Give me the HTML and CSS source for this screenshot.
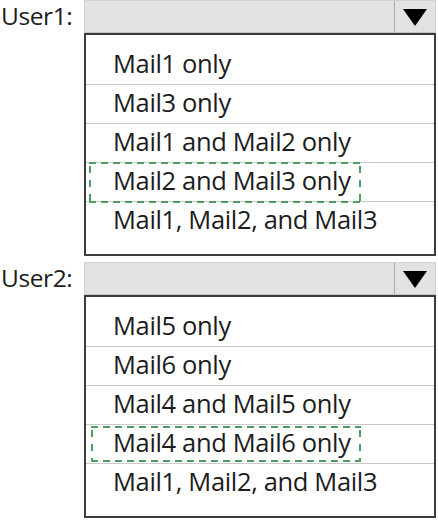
FILE: index.html
```html
<!DOCTYPE html>
<html lang="en">
<head>
<meta charset="utf-8">
<title>Mailbox permissions</title>
<link rel="stylesheet" href="styles.css">
</head>
<body>
<div class="page">
  <div class="question">
    <div class="label">User1:</div>
    <div class="dropdown">
      <div class="bar">
        <div class="field"></div>
        <div class="arrow"><span class="tri"></span></div>
      </div>
      <ul class="list">
        <li class="option">Mail1 only</li>
        <li class="option">Mail3 only</li>
        <li class="option">Mail1 and Mail2 only</li>
        <li class="option"><span class="answer a1">Mail2 and Mail3 only</span></li>
        <li class="option">Mail1, Mail2, and Mail3</li>
      </ul>
    </div>
  </div>
  <div class="question">
    <div class="label">User2:</div>
    <div class="dropdown">
      <div class="bar">
        <div class="field"></div>
        <div class="arrow"><span class="tri"></span></div>
      </div>
      <ul class="list">
        <li class="option">Mail5 only</li>
        <li class="option">Mail6 only</li>
        <li class="option">Mail4 and Mail5 only</li>
        <li class="option"><span class="answer a2">Mail4 and Mail6 only</span></li>
        <li class="option">Mail1, Mail2, and Mail3</li>
      </ul>
    </div>
  </div>
</div>
</body>
</html>
```

FILE: styles.css
```css
html, body {
  margin: 0;
  padding: 0;
  background: #ffffff;
}

body {
  font-family: "Open Sans", "Noto Sans", sans-serif;
  color: #1c1c1c;
}

.page {
  width: 438px;
  display: flex;
  flex-direction: column;
  gap: 6px;
}

.question {
  display: grid;
  grid-template-columns: 84px 352px;
}

.label {
  font-size: 24.5px;
  line-height: 31px;
  padding-left: 1px;
  letter-spacing: -0.4px;
}

.dropdown {
  display: flex;
  flex-direction: column;
}

.bar {
  display: flex;
  height: 33px;
  box-sizing: border-box;
  background: #e2e2e2;
  border: 1px solid #d2d2d2;
  border-bottom-color: #c4c4c4;
}

.field {
  flex: 1;
}

.arrow {
  width: 40px;
  border-left: 1px solid #ababab;
  display: flex;
  align-items: center;
  justify-content: center;
}

.tri {
  width: 0;
  height: 0;
  border-left: 12px solid transparent;
  border-right: 12px solid transparent;
  border-top: 17px solid #000000;
  margin-top: 1px;
}

.list {
  list-style: none;
  margin: 0;
  padding: 11px 0 14px 0;
  border: 2px solid #3b3b3b;
}

.option {
  height: 38px;
  border-bottom: 1px solid #c9c9c9;
  padding-left: 27px;
  font-size: 25.5px;
  line-height: 35px;
  letter-spacing: -0.35px;
  white-space: nowrap;
}

.option:last-child {
  border-bottom: none;
}

.answer {
  position: relative;
  display: inline-block;
}

.answer::before {
  content: "";
  position: absolute;
  left: -24px;
  right: -10px;
  background-image:
    repeating-linear-gradient(to right, #4f9d61 0 7px, transparent 7px 12px),
    repeating-linear-gradient(to right, #4f9d61 0 7px, transparent 7px 12px),
    repeating-linear-gradient(to bottom, #4f9d61 0 7px, transparent 7px 14px),
    repeating-linear-gradient(to bottom, #4f9d61 0 7px, transparent 7px 14px);
  background-size: 100% 2px, 100% 2px, 2px 100%, 2px 100%;
  background-position: 0 0, 0 100%, 0 4px, 100% 4px;
  background-repeat: no-repeat;
}

.a1::before {
  top: -1px;
  bottom: -5px;
}

.a2::before {
  top: 1px;
  bottom: -2px;
  left: -22px;
}
```
